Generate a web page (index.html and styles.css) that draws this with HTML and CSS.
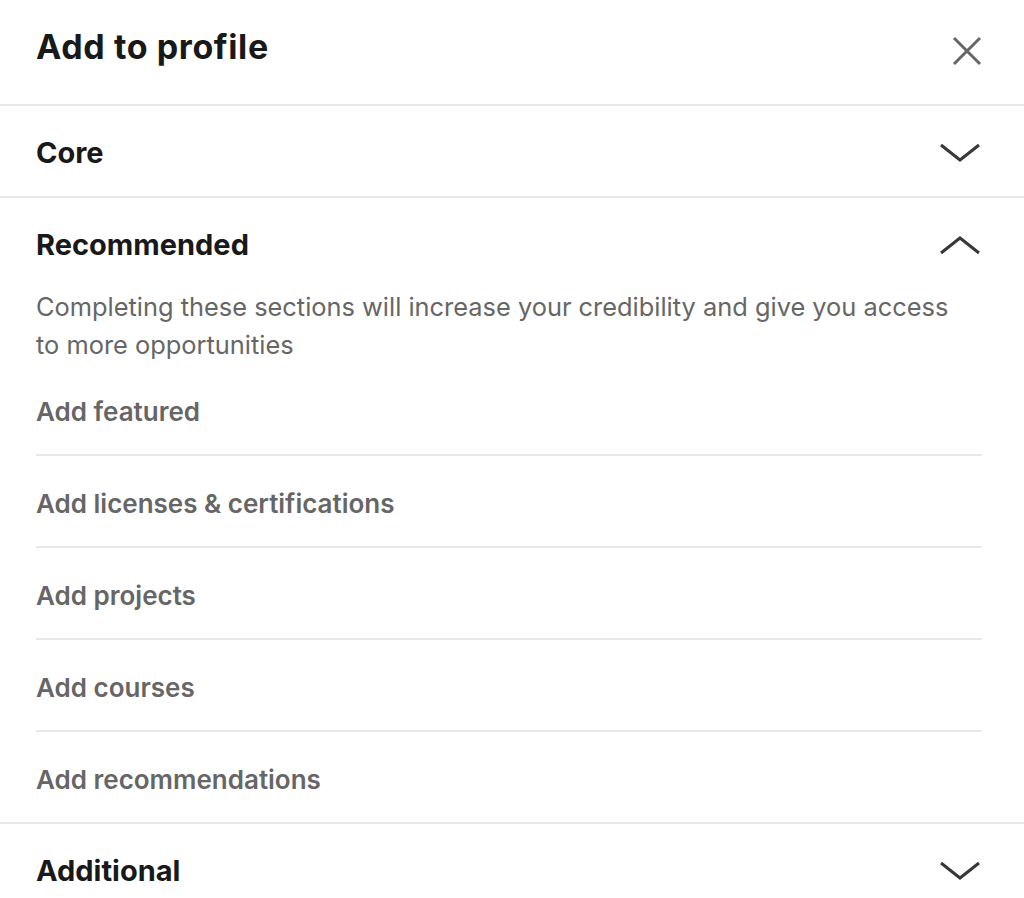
FILE: index.html
```html
<!DOCTYPE html>
<html lang="en">
<head>
<meta charset="utf-8">
<title>Add to profile</title>
<link rel="stylesheet" href="styles.css">
</head>
<body>
<div class="modal">
  <header class="modal-header">
    <h1 class="title">Add to profile</h1>
    <button class="close" aria-label="Dismiss">
      <svg width="30" height="30" viewBox="0 0 30 30"><path d="M2 2 L28 28 M28 2 L2 28" stroke="#666" stroke-width="3" fill="none" stroke-linecap="butt"/></svg>
    </button>
  </header>

  <section class="section">
    <div class="section-head">
      <h2 class="section-title">Core</h2>
      <svg class="chev" width="40" height="20" viewBox="0 0 40 20"><path d="M1 2 L20 17 L39 2" stroke="#383838" stroke-width="3" fill="none"/></svg>
    </div>
  </section>

  <section class="section">
    <div class="section-head">
      <h2 class="section-title">Recommended</h2>
      <svg class="chev" width="40" height="20" viewBox="0 0 40 20"><path d="M1 18 L20 3 L39 18" stroke="#383838" stroke-width="3" fill="none"/></svg>
    </div>
    <p class="desc">Completing these sections will increase your credibility and give you access to more opportunities</p>
    <ul class="items">
      <li class="item">Add featured</li>
      <li class="item">Add licenses &amp; certifications</li>
      <li class="item">Add projects</li>
      <li class="item">Add courses</li>
      <li class="item">Add recommendations</li>
    </ul>
  </section>

  <section class="section">
    <div class="section-head">
      <h2 class="section-title">Additional</h2>
      <svg class="chev" width="40" height="20" viewBox="0 0 40 20"><path d="M1 2 L20 17 L39 2" stroke="#383838" stroke-width="3" fill="none"/></svg>
    </div>
  </section>
</div>
</body>
</html>
```

FILE: styles.css
```css
html, body {
  margin: 0;
  padding: 0;
  background: #fff;
}
body {
  font-family: Inter, "Liberation Sans", Arial, sans-serif;
  color: rgba(0, 0, 0, 0.9);
}
.modal {
  width: 1024px;
}
.modal-header {
  box-sizing: border-box;
  height: 106px;
  display: flex;
  align-items: center;
  justify-content: space-between;
  padding: 0 42px 0 36px;
  border-bottom: 2px solid #e8e8e8;
}
.title {
  margin: 0;
  font-size: 34px;
  font-weight: 700;
  letter-spacing: 0.6px;
  line-height: 40px;
  color: #191919;
  position: relative;
  top: -5px;
}
.close {
  background: none;
  border: 0;
  padding: 0;
  width: 30px;
  height: 30px;
  display: flex;
  position: relative;
  top: -1px;
}
.section {
  border-bottom: 2px solid #e8e8e8;
}
.section-head {
  box-sizing: border-box;
  height: 90px;
  padding: 4px 44px 0 36px;
  display: flex;
  align-items: center;
  justify-content: space-between;
}
.section-title {
  margin: 0;
  font-size: 29px;
  font-weight: 700;
  line-height: 36px;
  color: #191919;
}
.chev {
  display: block;
}
.desc {
  margin: 0 62px 0 36px;
  font-size: 25.4px;
  line-height: 38px;
  color: #666;
}
.items {
  list-style: none;
  margin: 0 42px 0 36px;
  padding: 0;
}
.item {
  box-sizing: border-box;
  height: 92px;
  padding-top: 4px;
  display: flex;
  align-items: center;
  font-size: 26px;
  font-weight: 600;
  color: #666;
  border-bottom: 2px solid #e8e8e8;
}
.item:last-child {
  height: 90px;
  border-bottom: 0;
}
```
